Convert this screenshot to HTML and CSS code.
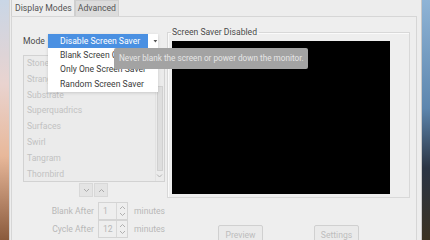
FILE: index.html
```html
<!DOCTYPE html>
<html lang="en">
<head>
    <meta charset="UTF-8">
    <meta name="viewport" content="width=device-width, initial-scale=1.0">
    <title>Screensaver Preferences</title>
    <link rel="stylesheet" href="styles.css">
</head>
<body>
    <div class="wall-left"></div>
    <div class="window">
        <div class="tabs">
            <div class="tab active">Display Modes</div>
            <div class="tab">Advanced</div>
        </div>
        <div class="panel">
            <div class="left-col">
                <div class="mode-row">
                    <span class="label">Mode</span>
                    <div class="combo"></div>
                </div>
                <div class="list">
                    <div class="list-items">
                        <div class="item">Stonerview</div>
                        <div class="item">Strange</div>
                        <div class="item">Substrate</div>
                        <div class="item">Superquadrics</div>
                        <div class="item">Surfaces</div>
                        <div class="item">Swirl</div>
                        <div class="item">Tangram</div>
                        <div class="item">Thornbird</div>
                    </div>
                    <div class="scrollbar">
                        <div class="track"><div class="thumb"></div></div>
                        <svg class="scroll-arrow" width="7" height="6" viewBox="0 0 7 6"><path d="M1 1.5 L3.5 4 L6 1.5" fill="none" stroke="#b4b4b4" stroke-width="1"/></svg>
                    </div>
                </div>
                <div class="nav-buttons">
                    <div class="small-btn"><svg width="7" height="5" viewBox="0 0 7 5"><path d="M1 1 L3.5 3.5 L6 1" fill="none" stroke="#aaaaaa" stroke-width="1"/></svg></div>
                    <div class="small-btn"><svg width="7" height="5" viewBox="0 0 7 5"><path d="M1 4 L3.5 1.5 L6 4" fill="none" stroke="#aaaaaa" stroke-width="1"/></svg></div>
                </div>
                <div class="spin-row">
                    <span class="spin-label">Blank After</span>
                    <div class="spin">
                        <span class="spin-value">1</span>
                        <span class="spin-arrows">
                            <svg width="7" height="5" viewBox="0 0 7 5"><path d="M1 4 L3.5 1.5 L6 4" fill="none" stroke="#b0b0b0" stroke-width="1"/></svg>
                            <svg width="7" height="5" viewBox="0 0 7 5"><path d="M1 1 L3.5 3.5 L6 1" fill="none" stroke="#b0b0b0" stroke-width="1"/></svg>
                        </span>
                    </div>
                    <span class="unit">minutes</span>
                </div>
                <div class="spin-row">
                    <span class="spin-label">Cycle After</span>
                    <div class="spin">
                        <span class="spin-value">12</span>
                        <span class="spin-arrows">
                            <svg width="7" height="5" viewBox="0 0 7 5"><path d="M1 4 L3.5 1.5 L6 4" fill="none" stroke="#b0b0b0" stroke-width="1"/></svg>
                            <svg width="7" height="5" viewBox="0 0 7 5"><path d="M1 1 L3.5 3.5 L6 1" fill="none" stroke="#b0b0b0" stroke-width="1"/></svg>
                        </span>
                    </div>
                    <span class="unit">minutes</span>
                </div>
            </div>
            <div class="right-col">
                <fieldset class="frame">
                    <legend>Screen Saver Disabled</legend>
                    <div class="preview-area"></div>
                </fieldset>
                <div class="action-row">
                    <div class="btn">Preview</div>
                    <div class="btn">Settings</div>
                </div>
            </div>
        </div>
    </div>
    <div class="wall-right"></div>

    <div class="popup">
        <div class="popup-item selected">
            <span class="sel-text">Disable Screen Saver</span>
            <svg class="combo-arrow" width="5" height="4" viewBox="0 0 5 4"><path d="M0.5 1 L4.5 1 L2.5 3.5 Z" fill="#555555"/></svg>
        </div>
        <div class="popup-item">Blank Screen Only</div>
        <div class="popup-item">Only One Screen Saver</div>
        <div class="popup-item">Random Screen Saver</div>
    </div>
    <div class="tooltip">Never blank the screen or power down the monitor.</div>
</body>
</html>
```

FILE: styles.css
```css
body {
    font-family: Roboto, "Liberation Sans", sans-serif;
    font-size: 8.6px;
    color: #4a4a4a;
    margin: 0;
    width: 430px;
    height: 240px;
    overflow: hidden;
    display: flex;
    position: relative;
}
.wall-left {
    width: 9px;
    background: linear-gradient(#c9d6e6, #e9d3cf 35%, #e8b89a 65%, #8a5a3c);
}
.wall-right {
    width: 8px;
    background: linear-gradient(#8fb4d6, #5d86ae 45%, #2b3544 70%, #3a3222);
}
.window {
    width: 411px;
    background-color: #ededed;
    border-left: 1px solid #d2d2d2;
    border-right: 1px solid #c8c8c8;
    padding-left: 1px;
    display: flex;
    flex-direction: column;
}
.tabs {
    display: flex;
    height: 16px;
    align-items: flex-end;
}
.tab {
    height: 15px;
    line-height: 15px;
    padding: 0 2px;
    border: 1px solid #cfcfcf;
    border-bottom: none;
    background-color: #dcdcdc;
    color: #555;
    font-size: 8.7px;
}
.tab.active {
    height: 16px;
    line-height: 16px;
    background-color: #eeeeee;
    padding: 0 2px 0 3px;
}
.panel {
    flex: 1;
    margin-right: 4px;
    border: 1px solid #d6d6d6;
    border-bottom: none;
    background-color: #eeeeee;
    padding-left: 11px;
    display: grid;
    grid-template-columns: 142px 243px;
    column-gap: 2px;
    align-items: start;
}
.left-col {
    margin-top: 17px;
    display: flex;
    flex-direction: column;
}
.mode-row {
    display: flex;
    align-items: center;
    height: 14px;
}
.mode-row .label {
    width: 25px;
}
.combo {
    width: 112px;
    height: 14px;
}
.list {
    margin-top: 7px;
    height: 125px;
    border: 1px solid #d2d2d2;
    background-color: #ebebeb;
    display: flex;
    overflow: hidden;
}
.list-items {
    flex: 1;
}
.item {
    height: 15.8px;
    line-height: 15.8px;
    padding-left: 3px;
    color: #c2c2c2;
}
.scrollbar {
    width: 8px;
    border-left: 1px solid #e2e2e2;
    display: flex;
    flex-direction: column;
    align-items: center;
}
.track {
    flex: 1;
    align-self: stretch;
    position: relative;
}
.thumb {
    position: absolute;
    left: 1px;
    right: 1px;
    top: 30px;
    bottom: 1px;
    background-color: #dedede;
    border: 1px solid #d0d0d0;
}
.scroll-arrow {
    margin: 1px 0 2px;
}
.nav-buttons {
    margin-top: 1px;
    display: flex;
    justify-content: center;
    gap: 1px;
}
.small-btn {
    width: 12px;
    height: 12px;
    border: 1px solid #d8d8d8;
    background-color: #e4e4e4;
    display: flex;
    align-items: center;
    justify-content: center;
}
.spin-row {
    display: flex;
    align-items: center;
    height: 18px;
}
.nav-buttons + .spin-row {
    margin-top: 5px;
}
.spin-label {
    width: 73px;
    text-align: right;
    color: #b8b8b8;
}
.spin {
    margin-left: 4px;
    width: 29px;
    height: 16px;
    border: 1px solid #d4d4d4;
    background-color: #eeeeee;
    display: flex;
}
.spin-value {
    flex: 1;
    line-height: 16px;
    padding-left: 4px;
    color: #b8b8b8;
}
.spin-arrows {
    width: 10px;
    border-left: 1px solid #d8d8d8;
    display: flex;
    flex-direction: column;
    align-items: center;
    justify-content: space-evenly;
}
.unit {
    margin-left: 6px;
    color: #b8b8b8;
}
.right-col {
    margin-top: 10px;
    display: flex;
    flex-direction: column;
}
.frame {
    margin: 0;
    padding: 0 0 3px 4px;
    border: 1px solid #d8d8d8;
    box-shadow: inset 1px 1px 0 #fafafa;
    min-width: 0;
}
.frame legend {
    padding: 0 2px 0 1px;
    margin-left: -1px;
    line-height: 10px;
    color: #4a4a4a;
}
.preview-area {
    margin-top: 4px;
    width: 218px;
    height: 153px;
    background-color: #000;
}
.action-row {
    margin-top: 27px;
    display: flex;
    justify-content: space-evenly;
}
.btn {
    width: 43px;
    height: 18px;
    line-height: 18px;
    text-align: center;
    border: 1px solid #d0d0d0;
    border-radius: 2px;
    background-color: #eaeaea;
    color: #bdbdbd;
}
.popup {
    position: absolute;
    left: 48px;
    top: 34px;
    width: 110px;
    padding-bottom: 1px;
    background-color: #ffffff;
    box-shadow: 0 1px 3px rgba(0, 0, 0, 0.15);
}
.popup-item {
    height: 14.2px;
    line-height: 14.2px;
    padding-left: 12px;
    color: #3c3c3c;
    white-space: nowrap;
}
.popup-item.selected {
    padding-left: 0;
    display: flex;
    align-items: center;
    color: #ffffff;
}
.sel-text {
    width: 93px;
    padding-left: 12px;
    background-color: #4a90e2;
}
.combo-arrow {
    margin-left: 5px;
}
.tooltip {
    position: absolute;
    left: 114px;
    top: 48px;
    width: 189px;
    height: 21px;
    line-height: 21px;
    padding-left: 5px;
    background-color: #a3a3a3;
    color: #e6e6e6;
    border-radius: 2px;
    font-size: 8.2px;
    white-space: nowrap;
    overflow: hidden;
}
```
